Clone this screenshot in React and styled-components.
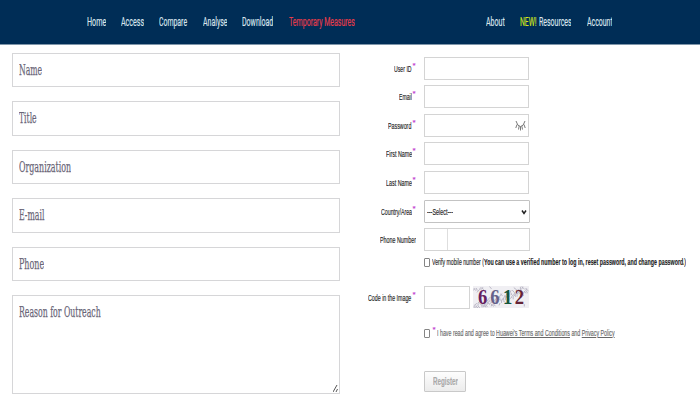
import React, { useLayoutEffect, useRef, useState } from "react";
import styled, { createGlobalStyle, css } from "styled-components";

const Global = createGlobalStyle`
  * { box-sizing: border-box; }
  body { margin: 0; background: #fff; overflow: hidden; }
`;

const Holder = styled.span`
  display: block;
  flex: none;
  width: ${(p) => p.$w}px;
  overflow: hidden;
  white-space: nowrap;
`;

const Glyphs = styled.span`
  display: inline-block;
  vertical-align: top;
  transform-origin: 0 50%;
`;

/* Condenses a run of text so that it fills exactly `w` pixels. */
function Condensed({ w, children }) {
  const ref = useRef(null);
  const [scale, setScale] = useState(1);
  useLayoutEffect(() => {
    setScale(w / ref.current.offsetWidth);
  }, [w, children]);
  return (
    <Holder $w={w}>
      <Glyphs ref={ref} style={{ transform: `scaleX(${scale})` }}>{children}</Glyphs>
    </Holder>
  );
}

const Page = styled.div`
  width: 700px;
  height: 400px;
  overflow: hidden;
  background: #fff;
  font-family: "Liberation Sans", Arial, sans-serif;
`;

const Nav = styled.nav`
  display: flex;
  height: 45px;
  padding: 0 88px 0 87px;
  align-items: center;
  justify-content: space-between;
  background: #002d56;
  border-bottom: 1px solid #7f96aa;
  font: 12px/16px Roboto, sans-serif;
  color: #dbe5ed;
  -webkit-text-stroke: 0.15px currentColor;
`;

const NavGroup = styled.div`
  display: flex;
  gap: 15.2px;
`;

const NavLink = styled.a`
  display: flex;
  gap: 2px;
  color: ${(p) => (p.$alert ? "#e83c4a" : "inherit")};
`;

const Fresh = styled.span`
  color: #d3e51c;
`;

const Columns = styled.main`
  display: grid;
  grid-template-columns: 340px 360px;
`;

const ContactForm = styled.form`
  display: flex;
  flex-direction: column;
  padding: 8px 0 0 12px;
`;

const ContactField = styled.div`
  display: flex;
  justify-content: space-between;
  height: ${(p) => p.$h}px;
  margin-bottom: ${(p) => p.$gap}px;
  padding: 6px 0 0 6px;
  border: 1px solid #d6d6d8;
  font: 14px/20px "DejaVu Serif", serif;
  color: #696577;
  -webkit-text-stroke: 0.25px currentColor;
`;

const Grip = styled.svg`
  align-self: flex-end;
  width: 6px;
  height: 9px;
`;

const SignupForm = styled.form`
  display: flex;
  flex-direction: column;
  padding-top: 12px;
  font-size: 9.5px;
  line-height: 12px;
  color: #222;
  -webkit-text-stroke: 0.15px currentColor;
`;

const FieldRow = styled.div`
  display: flex;
  height: ${(p) => p.$h}px;
`;

const Label = styled.label`
  display: flex;
  justify-content: flex-end;
  width: 76px;
  margin-right: 8px;
  padding-top: 5.5px;
`;

const Star = styled.span`
  flex: none;
  align-self: flex-start;
  width: ${(p) => p.$w || 4.5}px;
  margin-top: -2px;
  padding-left: 1px;
  font-size: 8px;
  line-height: 9px;
  color: #c23bd0;
`;

const boxed = css`
  height: 23px;
  border: 1px solid #d4d4d4;
  background: #fff;
`;

const Input = styled.div`
  ${boxed}
  display: flex;
  align-items: center;
  justify-content: flex-end;
  width: ${(p) => p.$w || 105}px;
  padding-right: 2px;
`;

const Select = styled.div`
  ${boxed}
  display: flex;
  align-items: center;
  justify-content: space-between;
  width: 106px;
  padding: 0 2px;
  border-color: #c3c3c3;
  border-radius: 1px;
  font-size: 9px;
`;

const PhoneInput = styled.div`
  ${boxed}
  width: 106px;
`;

const DialCode = styled.div`
  width: 23px;
  height: 100%;
  border-right: 1px solid #dedede;
`;

const CheckRow = styled.div`
  display: flex;
  align-items: center;
  height: 12px;
  padding-left: 84px;
  margin-top: ${(p) => p.$top}px;
  color: ${(p) => p.$color || "#222"};
  font-size: ${(p) => p.$size || 9.5}px;
`;

const Checkbox = styled.span`
  flex: none;
  width: 6px;
  height: 9px;
  margin: 1px 1.5px 0 0;
  border: 1px solid #858585;
  border-radius: 1px;
`;

const CodeRow = styled(FieldRow)`
  margin-top: 18px;
`;

const Captcha = styled.svg`
  width: 56px;
  height: 22px;
  margin: 0 0 0 3px;
`;

const RegisterButton = styled.button`
  display: flex;
  align-items: center;
  justify-content: center;
  width: 42px;
  height: 21px;
  margin: 32px 0 0 84px;
  padding: 0;
  border: 1px solid #c9c9c9;
  border-radius: 1px;
  background: linear-gradient(#fdfdfd, #ececec);
  font: bold 10.5px/13px "Liberation Sans", sans-serif;
  color: #a9a9a9;
`;

const contactFields = [
  ["Name", 23, 34, 14],
  ["Title", 17.5, 35, 14],
  ["Organization", 52, 34, 14],
  ["E-mail", 25.5, 35, 14],
  ["Phone", 25, 34, 14],
];

const signupFields = [
  ["User ID", 17.5, 28],
  ["Email", 13, 29],
  ["Password", 23.5, 28],
  ["First Name", 26, 29],
  ["Last Name", 26, 29],
];

function RequiredLabel({ text, w }) {
  return (
    <Label>
      <Condensed w={w}>{text}</Condensed>
      <Star>*</Star>
    </Label>
  );
}

const ClosedEye = () => (
  <svg width="11" height="11" viewBox="0 0 11 11" fill="none" stroke="#7b7b7b" strokeWidth="1">
    <path d="M1 1 Q2.5 6.5 5.5 6.5 Q8.5 6.5 10 1 M2 4.5 L.8 8 M4.2 6 L3.5 9.5 M5.5 6.5 V10.5 M6.8 6 L7.5 9.5 M9 4.5 L10.2 8" />
  </svg>
);

const digits = [
  ["6", 5, "#66205f"],
  ["6", 17.3, "#66618a"],
  ["1", 30, "#17563c"],
  ["2", 41.8, "#652436"],
];

const specks = Array.from({ length: 95 }, (_, i) => {
  const x = (i * 23.7) % 54;
  const y = (i * 7.3 + (i % 5) * 3.1) % 20;
  const dx = ((i * 5) % 7) - 3;
  return `M${x.toFixed(1)} ${y.toFixed(1)}l${dx} 2.4`;
}).join("");

const NoiseCode = () => (
  <Captcha viewBox="0 0 56 22">
    <rect x="0" y="0" width="56" height="22" fill="#f0eff3" />
    <path d={specks} stroke="#aaa6b8" strokeWidth="1" opacity=".75" />
    {digits.map(([d, x, fill], i) => (
      <text key={i} x={x} y="17.5" fill={fill} fontFamily="Liberation Serif" fontWeight="bold" fontSize="21" textLength="9.3" lengthAdjust="spacingAndGlyphs">{d}</text>
    ))}
  </Captcha>
);

export default function App() {
  return (
    <Page>
      <Global />
      <Nav>
        <NavGroup>
          <NavLink><Condensed w={19}>Home</Condensed></NavLink>
          <NavLink><Condensed w={23}>Access</Condensed></NavLink>
          <NavLink><Condensed w={28.2}>Compare</Condensed></NavLink>
          <NavLink><Condensed w={24.4}>Analyse</Condensed></NavLink>
          <NavLink><Condensed w={31}>Download</Condensed></NavLink>
          <NavLink $alert><Condensed w={66}>Temporary Measures</Condensed></NavLink>
        </NavGroup>
        <NavGroup>
          <NavLink><Condensed w={18.7}>About</Condensed></NavLink>
          <NavLink>
            <Fresh><Condensed w={16.5}>NEW!</Condensed></Fresh>
            <Condensed w={32.5}>Resources</Condensed>
          </NavLink>
          <NavLink><Condensed w={25.5}>Account</Condensed></NavLink>
        </NavGroup>
      </Nav>
      <Columns>
        <ContactForm>
          {contactFields.map(([text, w, h, gap], i) => (
            <ContactField key={text} $h={h} $gap={gap}>
              <Condensed w={w}>{text}</Condensed>
            </ContactField>
          ))}
          <ContactField $h={99} $gap={0}>
            <Condensed w={81.5}>Reason for Outreach</Condensed>
            <Grip viewBox="0 0 6 9" stroke="#555" strokeWidth="1">
              <path d="M0 8L4 1M3 8L4.5 5" />
            </Grip>
          </ContactField>
        </ContactForm>
        <SignupForm>
          {signupFields.map(([text, w, h]) => (
            <FieldRow key={text} $h={h}>
              <RequiredLabel text={text} w={w} />
              <Input>{text === "Password" && <ClosedEye />}</Input>
            </FieldRow>
          ))}
          <FieldRow $h={28}>
            <RequiredLabel text="Country/Area" w={31} />
            <Select>
              <Condensed w={26}>---Select---</Condensed>
              <svg width="6" height="6" viewBox="0 0 6 6" fill="none" stroke="#222" strokeWidth="1.5">
                <path d="M1 1.5L3 4.5L5 1.5" />
              </svg>
            </Select>
          </FieldRow>
          <FieldRow $h={23}>
            <Label><Condensed w={36}>Phone Number</Condensed></Label>
            <PhoneInput><DialCode /></PhoneInput>
          </FieldRow>
          <CheckRow $top={5}>
            <Checkbox />
            <Condensed w={52}>Verify mobile number (</Condensed>
            <b><Condensed w={200.5}>You can use a verified number to log in, reset password, and change password.</Condensed></b>
            <Condensed w={2}>)</Condensed>
          </CheckRow>
          <CodeRow $h={23}>
            <RequiredLabel text="Code in the Image" w={43.5} />
            <Input $w={46} />
            <NoiseCode />
          </CodeRow>
          <CheckRow $top={18} $color="#686868" $size={9}>
            <Checkbox />
            <Star $w={5.5}>*</Star>
            <Condensed w={177.5}>
              I have read and agree to <u>Huawei's Terms and Conditions</u> and <u>Privacy Policy</u>
            </Condensed>
          </CheckRow>
          <RegisterButton type="button"><Condensed w={25}>Register</Condensed></RegisterButton>
        </SignupForm>
      </Columns>
    </Page>
  );
}
